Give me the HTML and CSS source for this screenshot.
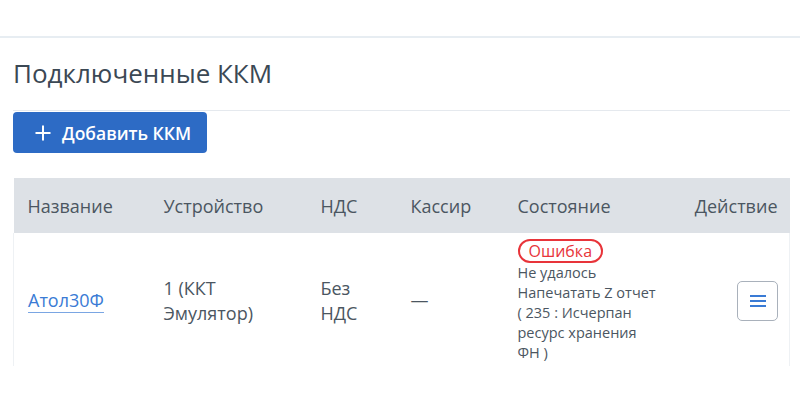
FILE: index.html
```html
<!DOCTYPE html>
<html lang="ru">
<head>
    <meta charset="UTF-8">
    <title>Подключенные ККМ</title>
    <link rel="stylesheet" href="styles.css">
</head>
<body>
    <!-- Top bar -->
    <div class="topbar"></div>

    <div class="container">
        <h1 class="page-title">Подключенные ККМ</h1>

        <div class="toolbar">
            <button class="btn-primary" type="button">
                <svg class="btn-icon" width="16" height="16" viewBox="0 0 16 16">
                    <path d="M8 0.5v15M0.5 8h15" stroke="#fff" stroke-width="2" fill="none"/>
                </svg>
                Добавить ККМ
            </button>
        </div>

        <!-- KKM table -->
        <table class="kkm-table">
            <colgroup>
                <col class="col-name">
                <col class="col-device">
                <col class="col-vat">
                <col class="col-cashier">
                <col class="col-state">
                <col class="col-action">
            </colgroup>
            <thead>
                <tr>
                    <th>Название</th>
                    <th>Устройство</th>
                    <th>НДС</th>
                    <th>Кассир</th>
                    <th>Состояние</th>
                    <th class="align-right">Действие</th>
                </tr>
            </thead>
            <tbody>
                <tr>
                    <td><a href="#" class="kkm-link">Атол30Ф</a></td>
                    <td>1 (ККТ<br>Эмулятор)</td>
                    <td>Без<br>НДС</td>
                    <td>—</td>
                    <td class="state-cell">
                        <span class="badge-error">Ошибка</span>
                        <div class="state-text">Не удалось Напечатать Z отчет ( 235 : Исчерпан ресурс хранения ФН )</div>
                    </td>
                    <td class="align-right">
                        <button class="btn-menu" type="button">
                            <svg width="16" height="12" viewBox="0 0 16 12">
                                <path d="M0 1h16M0 6h16M0 11h16" stroke="#3a7bd5" stroke-width="2"/>
                            </svg>
                        </button>
                    </td>
                </tr>
            </tbody>
        </table>
    </div>
</body>
</html>
```

FILE: styles.css
```css
/* General Styles */
body {
    font-family: 'Open Sans', 'Noto Sans', sans-serif;
    margin: 0;
    background-color: #fff;
    color: #4a5561;
}

.topbar {
    height: 36px;
    border-bottom: 2px solid #e7edf2;
}

.container {
    padding: 0 10px 0 13px;
}

.page-title {
    font-size: 26px;
    font-weight: 400;
    color: #3b4854;
    margin: 0;
    padding: 17px 0 19px;
    border-bottom: 1px solid #e5e9ee;
}

.toolbar {
    padding: 1px 0 25px;
}

.btn-primary {
    display: inline-flex;
    align-items: center;
    gap: 11px;
    height: 41px;
    width: 194px;
    padding: 0 0 0 22px;
    background-color: #2d6bc5;
    color: #fff;
    border: none;
    border-radius: 4px;
    font-family: inherit;
    font-size: 17.5px;
    font-weight: 600;
    cursor: pointer;
}

.kkm-table {
    width: 777px;
    border-collapse: collapse;
    table-layout: fixed;
    font-size: 18px;
}

.col-name { width: 136px; }
.col-device { width: 157px; }
.col-vat { width: 90px; }
.col-cashier { width: 107px; }
.col-state { width: 180px; }

.kkm-table th {
    background-color: #dde1e6;
    height: 55px;
    padding: 0 12px 0 14px;
    text-align: left;
    font-weight: 400;
    font-size: 18px;
    color: #4b5661;
}

.kkm-table th.align-right {
    padding-left: 0;
    text-align: right;
}

.kkm-table td {
    padding: 5px 11px 3px 14px;
    height: 124px;
    vertical-align: middle;
    line-height: 25px;
    color: #4b5661;
}

.kkm-table tbody tr {
    border-left: 1px solid #eef1f4;
    border-right: 1px solid #eef1f4;
}

.align-right {
    text-align: right;
}

.kkm-link {
    color: #3a7bd5;
    text-decoration: none;
    border-bottom: 1px solid #7aa6e3;
}

.badge-error {
    display: inline-block;
    border: 2px solid #e8343a;
    border-radius: 12px;
    color: #e8343a;
    font-size: 16px;
    line-height: 20px;
    padding: 0 9px;
}

.state-text {
    font-size: 14.5px;
    line-height: 20px;
    max-width: 142px;
}

.btn-menu {
    width: 41px;
    height: 40px;
    background: #fff;
    border: 1.5px solid #a9b1bb;
    border-radius: 5px;
    display: inline-flex;
    align-items: center;
    justify-content: center;
    cursor: pointer;
}
```
